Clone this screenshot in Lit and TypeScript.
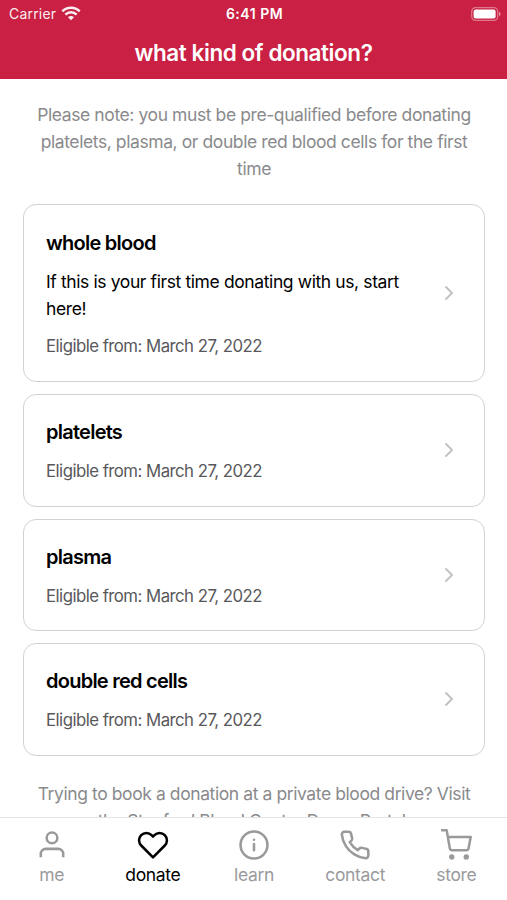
import { LitElement, html, css, svg } from "lit";
import { customElement } from "lit/decorators.js";

interface Donation { name: string; note?: string[]; }
const donations: Donation[] = [
  { name: "whole blood", note: ["If this is your first time donating with us, start", "here!"] },
  { name: "platelets" },
  { name: "plasma" },
  { name: "double red cells" },
];
const tabs = [
  { label: "me", icon: svg`<path d="M20.4 21.2v-2.6a3.7 3.7 0 0 0-3.7-3.7H7.3a3.7 3.7 0 0 0-3.7 3.7v2.6" stroke-linecap="butt"/><circle cx="12" cy="6.7" r="4"/>` },
  { label: "donate", active: true, icon: svg`<path d="M20.84 4.61a5.5 5.5 0 0 0-7.78 0L12 5.67l-1.06-1.06a5.5 5.5 0 0 0-7.78 7.78L12 21.23l8.84-8.84a5.5 5.5 0 0 0 0-7.78z"/>` },
  { label: "learn", icon: svg`<circle cx="12" cy="12" r="10.1"/><path d="M12 16v-4.8M12 8h.01"/>` },
  { label: "contact", icon: svg`<path d="M22 16.92v3a2 2 0 0 1-2.18 2 19.79 19.79 0 0 1-8.63-3.07 19.5 19.5 0 0 1-6-6 19.79 19.79 0 0 1-3.07-8.67A2 2 0 0 1 4.11 2h3a2 2 0 0 1 2 1.72c.127.96.361 1.903.7 2.81a2 2 0 0 1-.45 2.11L8.09 9.91a16 16 0 0 0 6 6l1.27-1.27a2 2 0 0 1 2.11-.45c.907.339 1.85.573 2.81.7A2 2 0 0 1 22 16.92z"/>` },
  { label: "store", icon: svg`<circle cx="8.8" cy="21" r="1.1" fill="currentColor"/><circle cx="19.7" cy="21" r="1.1" fill="currentColor"/><path d="M.8 1h4.2l2.4 13.7a1.5 1.5 0 0 0 1.5 1.2h11a1.5 1.5 0 0 0 1.5-1.2L23 6H6" stroke-linecap="butt"/>` },
];

@customElement("app-root")
export class AppRoot extends LitElement {
  static styles = css`
    :host { display: flex; flex-direction: column; height: 900px; overflow: hidden; background: #fff; color: #000; font-family: Inter, "Liberation Sans", sans-serif; font-size: 17.5px; }
    * { box-sizing: border-box; }
    svg { display: block; fill: none; stroke: currentColor; stroke-width: 1.9; stroke-linecap: round; stroke-linejoin: round; }
    header { background: #c92043; color: #fff; height: 79px; flex: none; }
    .status { display: grid; grid-template-columns: 1fr auto 1fr; align-items: center; height: 27px; padding: 0 6px 0 9px; font-size: 14px; }
    .carrier { display: flex; align-items: center; gap: 5px; letter-spacing: 0.2px; opacity: 0.93; }
    .time { font-weight: 600; letter-spacing: 0.5px; margin-right: 1px; }
    .battery { justify-self: end; }
    .title { font-size: 22.5px; font-weight: 600; line-height: 52px; text-align: center; letter-spacing: -0.43px; }
    main { flex: 1; min-height: 0; overflow: hidden; padding: 22px 22px 0 23px; }
    .intro, .outro { text-align: center; color: #8a8a8c; line-height: 27px; letter-spacing: -0.41px; white-space: nowrap; }
    .cards { display: flex; flex-direction: column; gap: 12px; margin: 21.5px 0 24.5px; }
    .card { display: flex; align-items: center; justify-content: space-between; border: 1.5px solid #d2d2d2; border-radius: 13px; padding: 0 28px 0 22px; height: 112.6px; }
    .card.tall { height: 178.5px; }
    .name { font-size: 20px; font-weight: 600; line-height: 30px; letter-spacing: -0.75px; padding-top: 2px; }
    .note { line-height: 27px; letter-spacing: -0.39px; margin: 10px 0 0; white-space: nowrap; }
    .date { font-size: 16.8px; color: #58585b; line-height: 27px; margin-top: 11px; letter-spacing: -0.53px; }
    .chevron { color: #c2c2c2; }
    nav { display: grid; grid-template-columns: repeat(5, 1fr); height: 83px; flex: none; padding-left: 1px; border-top: 1px solid #e4e4e4; background: #fff; }
    .tab { display: flex; flex-direction: column; align-items: center; padding-top: 11px; color: #9a9a9c; letter-spacing: -0.35px; }
    .tab.active { color: #000; }
    .label { line-height: 27px; }
  `;
  render() {
    return html`
      <header>
        <div class="status">
          <div class="carrier">Carrier
            <svg width="20" height="15" viewBox="0 0 20 15"><path d="M1.3 5.4a12.2 12.2 0 0 1 17.4 0M4.4 8.7a7.9 7.9 0 0 1 11.2 0" stroke-width="2.5" stroke-linecap="butt"/><path d="M10 14.2 7 11.2a4.2 4.2 0 0 1 6 0z" fill="currentColor" stroke="none"/></svg>
          </div>
          <div class="time">6:41 PM</div>
          <svg class="battery" width="30" height="14" viewBox="0 0 30 14"><rect x=".7" y=".6" width="26" height="12.8" rx="3.8" stroke-width="1.2" opacity=".4"/><rect x="2.6" y="2.4" width="22" height="9.2" rx="2" fill="currentColor" stroke="none"/><path d="M28 4.8c2 .7 2 3.7 0 4.4z" fill="currentColor" stroke="none" opacity=".5"/></svg>
        </div>
        <div class="title">what kind of donation?</div>
      </header>
      <main>
        <div class="intro">Please note: you must be pre-qualified before donating<br>platelets, plasma, or double red blood cells for the first<br>time</div>
        <div class="cards">
          ${donations.map((d) => html`<section class="card ${d.note ? "tall" : ""}">
            <div>
              <div class="name">${d.name}</div>
              ${d.note ? html`<div class="note">${d.note[0]}<br>${d.note[1]}</div>` : ""}
              <div class="date">Eligible from: March 27, 2022</div>
            </div>
            <svg class="chevron" width="14" height="16" viewBox="0 0 14 16"><path d="m4 2 6 6-6 6"/></svg>
          </section>`)}
        </div>
        <div class="outro">Trying to book a donation at a private blood drive? Visit<br>the Stanford Blood Center Donor Portal.</div>
      </main>
      <nav>
        ${tabs.map((t) => html`<div class="tab ${t.active ? "active" : ""}"><svg width="32" height="32" viewBox="0 0 24 24">${t.icon}</svg><div class="label">${t.label}</div></div>`)}
      </nav>`;
  }
}
